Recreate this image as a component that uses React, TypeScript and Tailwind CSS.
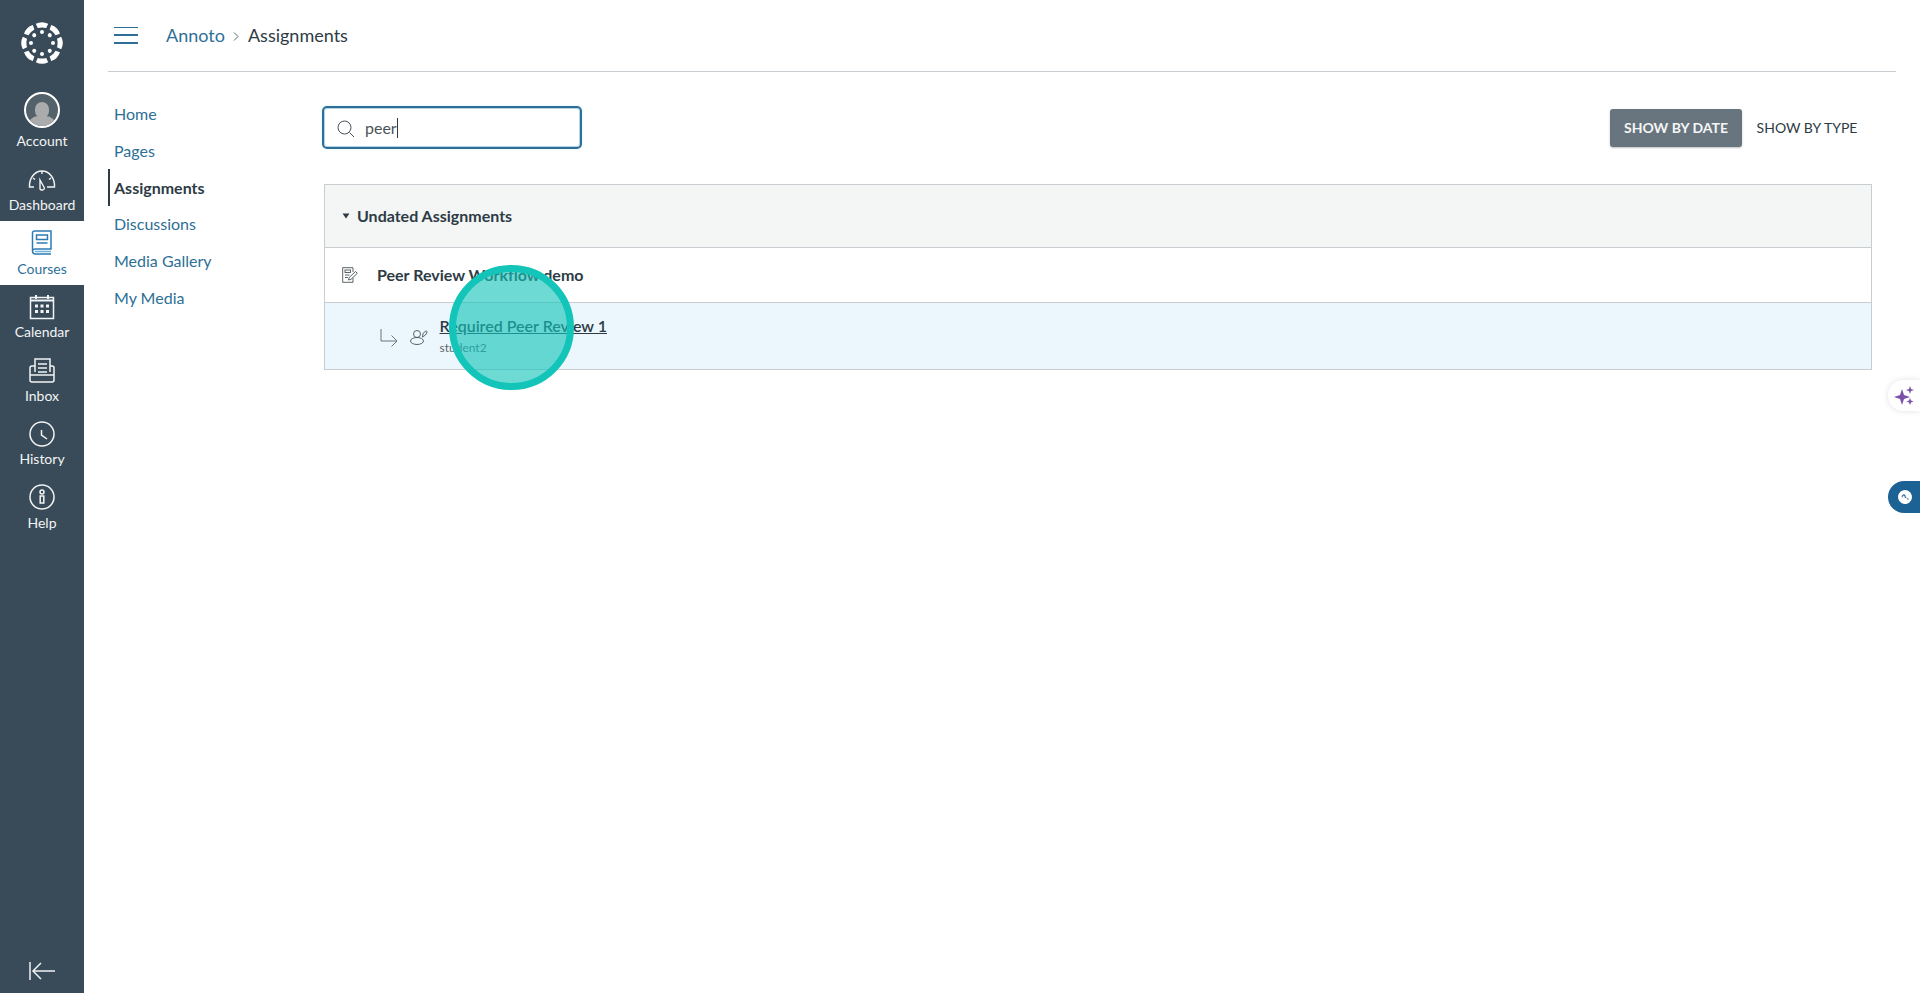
const sideItems = [
  { name: "Dashboard", icon: <DashboardIcon /> },
  { name: "Courses", icon: <CoursesIcon />, active: true },
  { name: "Calendar", icon: <CalendarIcon /> },
  { name: "Inbox", icon: <InboxIcon /> },
  { name: "History", icon: <HistoryIcon /> },
  { name: "Help", icon: <HelpIcon /> },
];

const courseLinks = [
  { name: "Home" },
  { name: "Pages" },
  { name: "Assignments", active: true },
  { name: "Discussions" },
  { name: "Media Gallery" },
  { name: "My Media" },
];

function CanvasLogo() {
  const petals = [0, 45, 90, 135, 180, 225, 270, 315];
  return (
    <svg width="44" height="44" viewBox="0 0 44 44" fill="white">
      {petals.map((deg) => (
        <g key={deg} transform={`rotate(${deg} 22 22)`}>
          <path d="M17.800 7 L15.800 2.800 Q22 -0.400 28.200 2.800 L26.200 7 Q22 5.800 17.800 7 Z" />
          <circle cx="22" cy="11" r="2" />
        </g>
      ))}
    </svg>
  );
}

function DashboardIcon() {
  return (
    <svg width="28" height="22" viewBox="0 0 28 22" fill="none" stroke="currentColor" strokeWidth="1.400">
      <path d="M6 18 H1.500 C1 10 6 2 14 2 C22 2 27 10 26.500 18 H19" />
      <path d="M12 11 L16.500 19 A2.500 2.500 0 0 1 12 20 Z" />
      <path d="M14 2 V5 M5 9 L7 10.500 M23 9 L21 10.500" />
    </svg>
  );
}

function CoursesIcon() {
  return (
    <svg width="22" height="26" viewBox="0 0 22 26" fill="none" stroke="#2d7bb5" strokeWidth="1.500">
      <path d="M1.500 21 V3 A2 2 0 0 1 3.500 1 H20 V19 H4 A2.500 2.500 0 0 0 1.500 21 A3 3 0 0 0 4.500 24 H20" />
      <rect x="5.500" y="5" width="11" height="4.500" />
      <path d="M5.500 13 H16.500" />
      <path d="M4 21.500 H20" stroke="#6fb1dc" />
    </svg>
  );
}

function CalendarIcon() {
  return (
    <svg width="26" height="26" viewBox="0 0 26 26" fill="none" stroke="currentColor" strokeWidth="1.500">
      <rect x="1.500" y="3.500" width="23" height="21" />
      <path d="M7 1 V5 M19 1 V5 M1.500 6.500 H24.500" strokeWidth="2" />
      {[6, 11.500, 17].map((x) =>
        [10.500, 16].map((y) => <rect key={`${x}-${y}`} x={x} y={y} width="3" height="3" fill="currentColor" stroke="none" />)
      )}
    </svg>
  );
}

function InboxIcon() {
  return (
    <svg width="26" height="25" viewBox="0 0 26 25" fill="none" stroke="currentColor" strokeWidth="1.500">
      <path d="M6 14 V1 H21 V14" />
      <path d="M9 6 H18 M9 10 H18 M9 14 H18" />
      <path d="M6 8 H3 A2 2 0 0 0 1 10 V22 A2 2 0 0 0 3 24 H23 A2 2 0 0 0 25 22 V10 A2 2 0 0 0 23 8 H21" />
      <path d="M1 17 H25" />
    </svg>
  );
}

function HistoryIcon() {
  return (
    <svg width="26" height="26" viewBox="0 0 26 26" fill="none" stroke="currentColor" strokeWidth="1.500">
      <circle cx="13" cy="13" r="12" />
      <path d="M12.500 9 V14 L18 18" />
    </svg>
  );
}

function HelpIcon() {
  return (
    <svg width="26" height="26" viewBox="0 0 26 26" fill="none" stroke="currentColor" strokeWidth="1.500">
      <circle cx="13" cy="13" r="12" />
      <circle cx="13" cy="8" r="2" />
      <rect x="11.200" y="12" width="3.600" height="7" />
    </svg>
  );
}

function AssignmentIcon() {
  return (
    <svg width="16" height="16" viewBox="0 0 16 16" fill="none" stroke="#4a5358" strokeWidth="0.900">
      <path d="M11 5 V0.700 H0.700 V15.300 H11 V11" />
      <rect x="3" y="3" width="5.500" height="2.500" />
      <path d="M3 8 H7.500 M3 10.500 H6" />
      <path d="M6.500 13 L7.200 10.500 L13.500 4.500 L15.300 6.300 L9 12.300 Z" />
    </svg>
  );
}

function ReplyArrow() {
  return (
    <svg width="18" height="18" viewBox="0 0 18 18" fill="none" stroke="#5c666c" strokeWidth="0.900">
      <path d="M1 0 V12 H17 M11.500 6.500 L17 12 L11.500 17.500" />
    </svg>
  );
}

function PeerIcon() {
  return (
    <svg width="18" height="15" viewBox="0 0 18 15" fill="none" stroke="#4a5358" strokeWidth="0.900">
      <circle cx="7" cy="4" r="3.500" />
      <ellipse cx="7" cy="11" rx="6.500" ry="3.500" />
      <path d="M12.500 7 L13 3.500 L16 0.800 L17.200 1.800 L15.500 5 Z" />
    </svg>
  );
}

export default function App() {
  return (
    <div className="relative flex h-[993px] w-[1920px] overflow-hidden bg-white font-['Lato','Open_Sans',sans-serif] text-[#2d3b45]">
      {/* global nav */}
      <aside className="flex w-[84px] shrink-0 flex-col bg-[#394b58] text-white">
        <div className="flex h-[92px] items-center justify-center pb-[6px]">
          <CanvasLogo />
        </div>
        <div className="flex h-[65.500px] flex-col items-center">
          <div className="flex h-[36px] w-[36px] items-end justify-center overflow-hidden rounded-full border-2 border-white bg-[#53616b]">
            <div className="flex flex-col items-center">
              <div className="h-[16px] w-[14px] rounded-full bg-[#a9abad]" />
              <div className="-mt-[2px] h-[10px] w-[28px] rounded-t-[12px] bg-[#a9abad]" />
            </div>
          </div>
          <span className="mt-[4px] text-[14px] leading-[18px] text-[#f2f4f5]">Account</span>
        </div>
        {sideItems.map((item) => (
          <div
            key={item.name}
            className={`flex h-[63.500px] flex-col items-center justify-end pb-[7px] ${
              item.active ? "bg-white text-[#2d6f96]" : "text-[#f2f4f5]"
            }`}
          >
            <div className="flex h-[27px] items-center">{item.icon}</div>
            <span className="mt-[3px] text-[14px] leading-[18px]">{item.name}</span>
          </div>
        ))}
        <div className="mt-auto flex h-[44px] items-center justify-center pr-[1px] text-[#eef1f2]">
          <svg width="28" height="20" viewBox="0 0 28 20" fill="none" stroke="currentColor" strokeWidth="1.500">
            <path d="M2 1 V19 M27 10 H5 M13 2 L5 10 L13 18" />
          </svg>
        </div>
      </aside>

      {/* main */}
      <div className="flex min-w-0 flex-1 flex-col pl-[24px] pr-[24px]">
        <header className="flex h-[72px] shrink-0 items-center border-b border-[#c7cdd1] pb-[1px]">
          <div className="ml-[6px] flex h-[17px] w-[24px] flex-col justify-between">
            <div className="h-[1.500px] bg-[#2d6f96]" />
            <div className="h-[1.500px] bg-[#2d6f96]" />
            <div className="h-[1.500px] bg-[#2d6f96]" />
          </div>
          <span className="ml-[28px] text-[18px] text-[#2d6f96]">Annoto</span>
          <svg className="mx-[8.500px] mt-[3px]" width="6" height="9" viewBox="0 0 6 9" fill="none" stroke="#5c666c">
            <path d="M1 0.500 L5 4.500 L1 8.500" />
          </svg>
          <span className="text-[18px] text-[#2d3b45]">Assignments</span>
        </header>

        <div className="flex min-h-0 flex-1">
          <nav className="mt-[24px] w-[214px] shrink-0">
            {courseLinks.map((link) => (
              <div
                key={link.name}
                className={`flex h-[36.700px] items-center text-[16px] ${
                  link.active
                    ? "border-l-2 border-[#2d3b45] pl-[4px] font-bold text-[#2d3b45]"
                    : "pl-[6px] text-[#2d6f96]"
                }`}
              >
                {link.name}
              </div>
            ))}
          </nav>

          <main className="min-w-0 flex-1">
            <div className="mt-[34px] flex items-center justify-between">
              <div className="flex h-[43px] w-[260px] items-center rounded-[5px] border-[2px] border-[#2d6f96] pl-[13px] shadow-[inset_0_0_0_1px_#b5d3e4,0_0_3px_#d6f1ff]">
                <svg className="mt-[2px]" width="18" height="18" viewBox="0 0 18 18" fill="none" stroke="#4a5358" strokeWidth="1">
                  <circle cx="7.500" cy="7.500" r="6.500" />
                  <path d="M12.500 12.500 L17 17" />
                </svg>
                <span className="ml-[10px] text-[16px] text-[#4a5358]">peer</span>
                <div className="h-[20px] w-px bg-[#2d3b45]" />
              </div>
              <div className="mr-[24px] flex items-center">
                <div className="flex h-[38px] w-[132px] items-center justify-center rounded-[3px] bg-[#68757f] text-[14px] font-bold text-[#f5f5f5] shadow-[0_1px_2px_rgba(0,0,0,0.25)]">
                  SHOW BY DATE
                </div>
                <div className="flex h-[38px] w-[130px] items-center justify-center text-[14px] text-[#2d3b45]">
                  SHOW BY TYPE
                </div>
              </div>
            </div>

            <section className="ml-[2px] mr-[24px] mt-[35px] border border-[#c7cdd1]">
              <div className="flex h-[63px] items-center border-b border-[#c7cdd1] bg-[#f4f5f5] pl-[17px]">
                <svg width="8" height="6" viewBox="0 0 8 6" fill="#2d3b45">
                  <path d="M0.500 0.500 H7.500 L4 5.500 Z" />
                </svg>
                <span className="ml-[7px] text-[16px] font-bold">Undated Assignments</span>
              </div>
              <div className="flex h-[55px] items-center border-b border-[#c7cdd1] pl-[17px]">
                <AssignmentIcon />
                <span className="ml-[19px] text-[16px] font-bold">Peer Review Workflow demo</span>
              </div>
              <div className="flex h-[66px] items-center bg-[#ebf6fd] pl-[55px]">
                <div className="mt-[4px]">
                  <ReplyArrow />
                </div>
                <div className="ml-[12px] mt-[3px]">
                  <PeerIcon />
                </div>
                <div className="ml-[11.500px] flex flex-col">
                  <span className="text-[16px] font-semibold leading-[20px] underline">Required Peer Review 1</span>
                  <span className="mt-[3.500px] text-[12px] leading-[16px] text-[#5c666c]">student2</span>
                </div>
              </div>
            </section>
          </main>
        </div>
      </div>

      {/* click marker */}
      <div className="absolute left-[449px] top-[265px] h-[125px] w-[125px] rounded-full border-[7px] border-[#13c4b8] bg-[#13c4b8]/[0.62]" />

      {/* floating widgets */}
      <div className="absolute right-0 top-[380px] flex h-[31px] w-[32px] items-center rounded-l-[16px] bg-white pl-[6px] shadow-[0_0_6px_rgba(0,0,0,0.12)]">
        <svg width="22" height="22" viewBox="0 0 22 22" fill="#7b52a8">
          <path d="M8 4 L10 10 L16 12 L10 14 L8 20 L6 14 L0 12 L6 10 Z" />
          <path d="M16 1 L17 4 L20 5 L17 6 L16 9 L15 6 L12 5 L15 4 Z" />
          <path d="M16 13 L17 15.500 L19.500 16.500 L17 17.500 L16 20 L15 17.500 L12.500 16.500 L15 15.500 Z" />
        </svg>
      </div>
      <div className="absolute right-0 top-[481px] flex h-[32px] w-[32px] items-center rounded-l-[16px] bg-[#1d6295] pl-[10px]">
        <div className="flex h-[14px] w-[14px] rotate-[-60deg] items-center justify-center rounded-full bg-white text-[10px] font-bold leading-none text-[#1d6295]">
          ?
        </div>
      </div>
    </div>
  );
}
